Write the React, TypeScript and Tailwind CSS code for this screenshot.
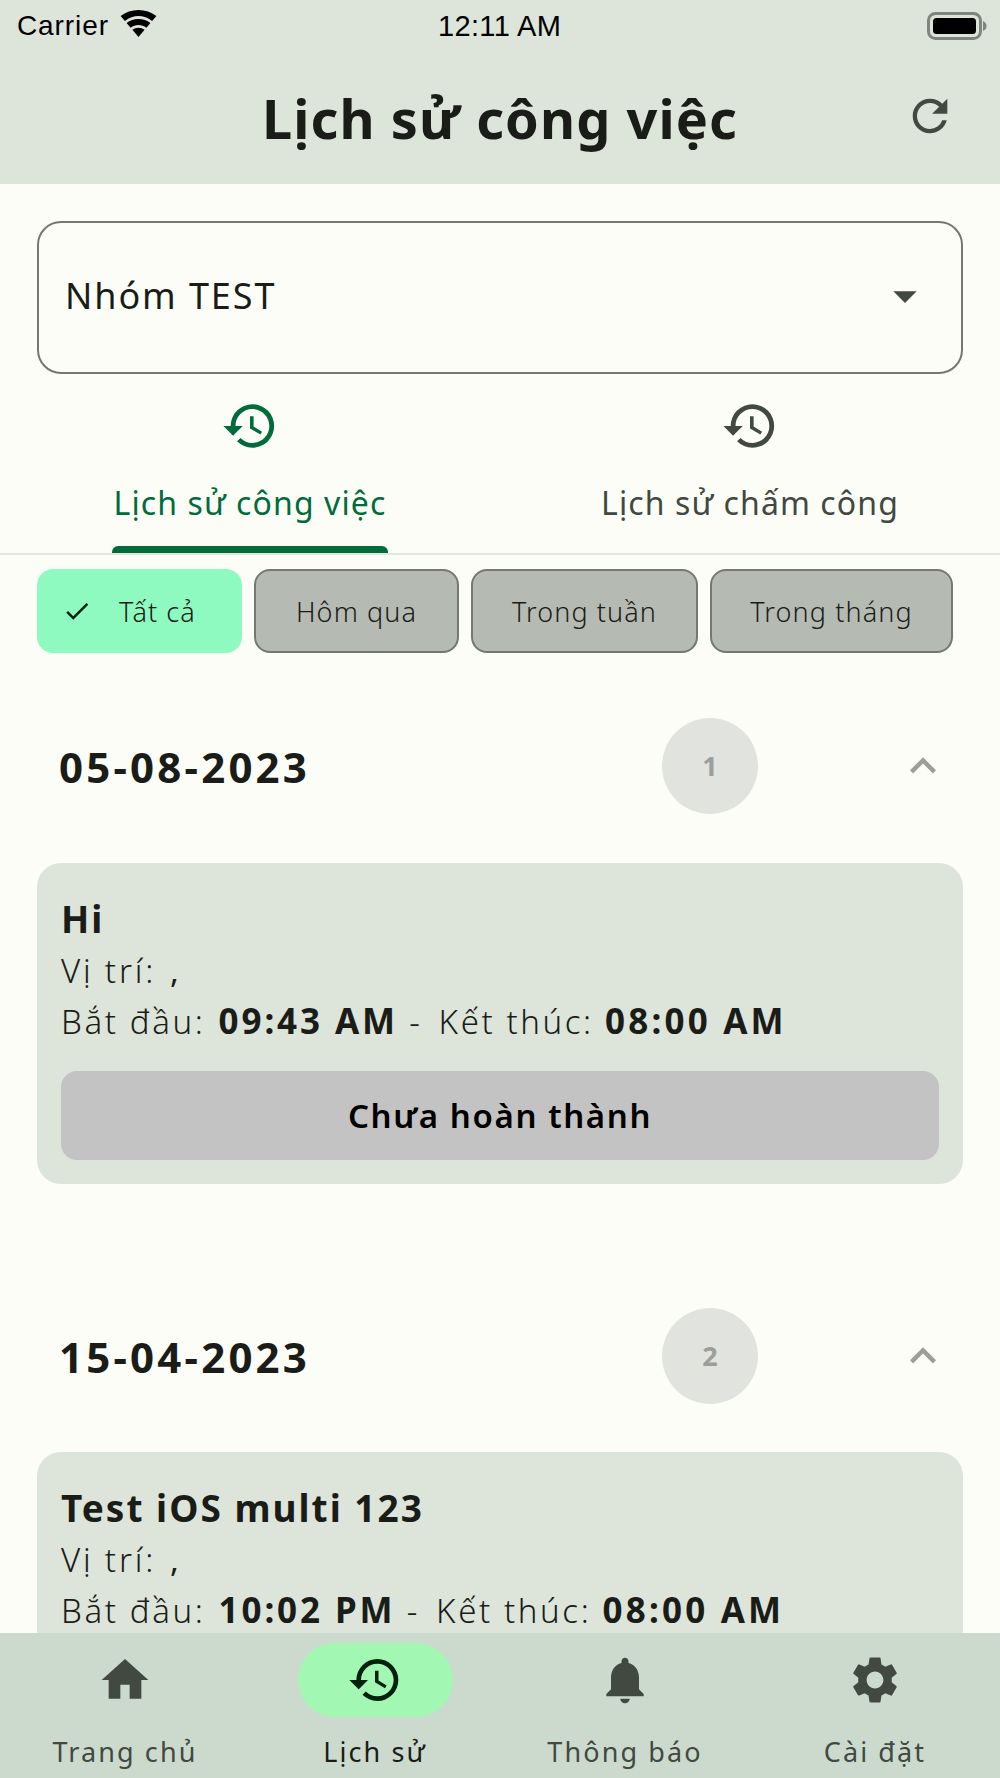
import { MdHistory, MdRefresh, MdHome, MdNotifications, MdSettings, MdCheck, MdKeyboardArrowUp, MdArrowDropDown } from "react-icons/md";

const font = { fontFamily: '"Noto Sans", "Open Sans", sans-serif' };

function WifiGlyph() {
  return (
    <svg width="37" height="27" viewBox="0 0 37 27" fill="#000">
      <path d="M18.5 27 L12.4 19.8 C15.8 17 21.2 17 24.6 19.8 Z" />
      <path d="M10.6 17.7 L6.6 13 C13 7.6 24 7.6 30.4 13 L26.4 17.7 C21.8 14 15.2 14 10.6 17.7 Z" />
      <path d="M4.9 11 L0.6 6 C10.4 -2 26.6 -2 36.4 6 L32.1 11 C23.8 4.4 13.2 4.4 4.9 11 Z" />
    </svg>
  );
}

function StatusBar() {
  return (
    <div className="relative flex h-[52px] items-center justify-between pl-[17px] pr-[13px] text-black font-['Liberation_Sans',sans-serif]">
      <div className="flex items-center gap-[11px]">
        <span className="text-[28px] leading-none tracking-[0.9px]">Carrier</span>
        <div className="-mt-[6px]"><WifiGlyph /></div>
      </div>
      <span className="absolute left-[438px] top-[10px] text-[29px] leading-[32px] font-medium tracking-[0.35px]">12:11 AM</span>
      <svg width="60" height="28" viewBox="0 0 60 28">
        <rect x="1.5" y="1.5" width="52" height="25" rx="7" fill="none" stroke="#7f847c" strokeWidth="3" />
        <rect x="6" y="6" width="43" height="16" rx="3.5" fill="#000" />
        <path d="M56 9 C58.5 10 59.5 12 59.5 14 C59.5 16 58.5 18 56 19 Z" fill="#7f847c" />
      </svg>
    </div>
  );
}

function Chip({ label, active, w }: { label: string; active?: boolean; w: string }) {
  return (
    <div className={`${w} flex h-[84px] shrink-0 items-center justify-center rounded-[16px] pt-[2px] text-[27px] font-light tracking-[1.1px] text-[#1a1c18] ${active ? "bg-[#8ffac0] gap-[27px] pr-[21px]" : "border-2 border-[#74796f] bg-[#b5bab2]"}`}>
      {active && <MdCheck size={30} className="-mt-[2px] text-[#00210f]" />}
      <span>{label}</span>
    </div>
  );
}

function GroupHeader({ date, count }: { date: string; count: number }) {
  return (
    <div className="flex h-[96px] items-center pl-[59px] pr-[51px]">
      <span className="mt-[1px] flex-1 text-[42px] font-bold tracking-[3.2px] text-[#1a1c18]">{date}</span>
      <div className="flex h-[96px] w-[96px] items-center justify-center rounded-full bg-[#e1e3de] text-[27px] font-bold text-[#9c9f99]">{count}</div>
      <MdKeyboardArrowUp size={52} className="ml-[139px] text-[#9c9f99]" />
    </div>
  );
}

function TaskCard({ title, start, end, cut }: { title: string; start: string; end: string; cut?: boolean }) {
  return (
    <div className={`mx-[37px] bg-[#dde4da] px-[24px] pt-[32px] text-[#1a1c18] ${cut ? "rounded-t-[24px] h-[300px]" : "rounded-[24px] h-[321px]"}`}>
      <div className="text-[37px] leading-[48px] font-bold tracking-[2px]">{title}</div>
      <div className="mt-[3px] text-[33px] leading-[50px] font-light tracking-[2.8px]">
        Vị trí:<span className="ml-[14px] font-normal">,</span>
      </div>
      <div className="text-[33px] leading-[50px] font-light tracking-[2.6px]">
        Bắt đầu: <b className="ml-[2px] text-[35px] font-bold tracking-[2.9px]">{start}</b> - <span className="ml-[5px]">Kết thúc:</span> <b className="text-[35px] font-bold tracking-[3.2px]">{end}</b>
      </div>
      {!cut && (
        <div className="mt-[24px] flex h-[89px] items-center justify-center rounded-[16px] bg-[#c3c3c3] text-[33px] font-semibold tracking-[1.6px] text-black">
          Chưa hoàn thành
        </div>
      )}
    </div>
  );
}

function NavItem({ icon, label, active, w }: { icon: React.ReactNode; label: string; active?: boolean; w: string }) {
  return (
    <div className={`${w} flex flex-col items-center`}>
      <div className={`flex h-[74px] w-[155px] items-center justify-center rounded-full ${active ? "bg-[#a2f8b2] text-[#00210f]" : "text-[#414941]"}`}>
        {icon}
      </div>
      <span className={`mt-[17px] text-[27px] leading-[36px] tracking-[2.1px] ${active ? "text-[#1a1c18]" : "text-[#414941]"}`}>{label}</span>
    </div>
  );
}

export default function App() {
  return (
    <div style={font} className="flex h-[1778px] w-[1000px] flex-col overflow-hidden bg-[#fdfdf7]">
      <header className="h-[184px] shrink-0 bg-[#dde4da]">
        <StatusBar />
        <div className="relative flex h-[132px] items-center justify-center">
          <h1 className="text-[54px] font-bold tracking-[1.1px] text-[#1a1c18]">Lịch sử công việc</h1>
          <MdRefresh size={52} className="absolute left-[904px] top-[38px] text-[#414941]" />
        </div>
      </header>

      <main className="min-h-0 flex-1 overflow-hidden pt-[37px]">
        <div className="mx-[37px] flex h-[153px] items-center justify-between rounded-[24px] border-2 border-[#74796f] pl-[26px] pr-[28px]">
          <span className="-mt-[3px] text-[36px] tracking-[1.9px] text-[#1a1c18]">Nhóm TEST</span>
          <MdArrowDropDown size={56} className="-mt-[4px] text-[#414941]" />
        </div>

        <div className="flex h-[181px] border-b-2 border-[#e3e6df]">
          <div className="flex w-[500px] flex-col items-center pt-[23px] text-[#006c3b]">
            <MdHistory size={58} />
            <span className="mt-[26px] text-[32px] leading-[44px] tracking-[1.1px]">Lịch sử công việc</span>
            <div className="mt-[21px] h-[7px] w-[276px] rounded-t-[6px] bg-[#006c3b]" />
          </div>
          <div className="flex w-[500px] flex-col items-center pt-[23px] text-[#414941]">
            <MdHistory size={58} />
            <span className="mt-[26px] text-[32px] leading-[44px] tracking-[1.1px]">Lịch sử chấm công</span>
          </div>
        </div>

        <div className="mt-[14px] flex gap-[12px] pl-[37px]">
          <Chip label="Tất cả" active w="w-[205px]" />
          <Chip label="Hôm qua" w="w-[205px]" />
          <Chip label="Trong tuần" w="w-[227px]" />
          <Chip label="Trong tháng" w="w-[243px]" />
        </div>

        <div className="mt-[65px]">
          <GroupHeader date="05-08-2023" count={1} />
        </div>
        <div className="mt-[49px]">
          <TaskCard title="Hi" start="09:43 AM" end="08:00 AM" />
        </div>
        <div className="mt-[124px]">
          <GroupHeader date="15-04-2023" count={2} />
        </div>
        <div className="mt-[48px]">
          <TaskCard title="Test iOS multi 123" start="10:02 PM" end="08:00 AM" cut />
        </div>
      </main>

      <nav className="flex h-[145px] shrink-0 justify-between bg-[#ccdace] pt-[10px]">
        <NavItem w="w-[250px]" icon={<MdHome size={56} />} label="Trang chủ" />
        <NavItem w="w-[250px]" icon={<MdHistory size={56} />} label="Lịch sử" active />
        <NavItem w="w-[250px]" icon={<MdNotifications size={56} />} label="Thông báo" />
        <NavItem w="w-[250px]" icon={<MdSettings size={56} />} label="Cài đặt" />
      </nav>
    </div>
  );
}
